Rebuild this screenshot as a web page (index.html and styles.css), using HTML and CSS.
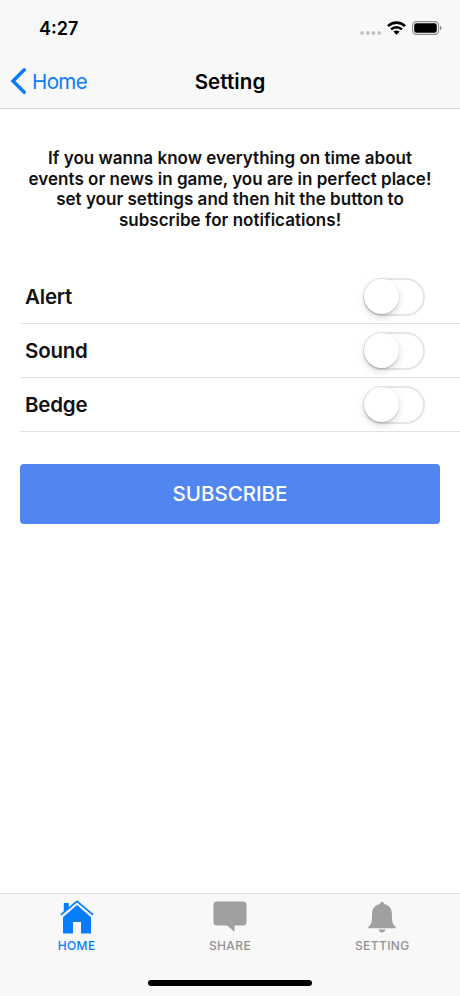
FILE: index.html
```
<!DOCTYPE html>
<html lang="en">
<head>
    <meta charset="UTF-8">
    <meta name="viewport" content="width=device-width, initial-scale=1.0">
    <title>Setting</title>
    <link rel="stylesheet" href="styles.css">
</head>
<body>

<div class="screen">
    <header class="header">
        <div class="status-bar">
            <span class="time">4:27</span>
            <div class="status-icons">
                <svg class="dots" width="22" height="4" viewBox="0 0 22 4" fill="#c2c2c2">
                    <circle cx="2" cy="2" r="1.9"/>
                    <circle cx="7.8" cy="2" r="1.9"/>
                    <circle cx="13.5" cy="2" r="1.9"/>
                    <circle cx="19.3" cy="2" r="1.9"/>
                </svg>
                <svg class="wifi" width="19" height="14" viewBox="0 0 19 14">
                    <g fill="none" stroke="#000" stroke-width="2.6">
                        <path d="M1 5.1C5.7 .5 13.3 .5 18 5.1"/>
                        <path d="M4.1 8.4c3-2.9 7.8-2.9 10.8 0"/>
                    </g>
                    <path d="M6.4 10.6c1.8-1.6 4.4-1.6 6.2 0L9.5 13.7z"/>
                </svg>
                <svg class="battery" width="30" height="14" viewBox="0 0 30 14">
                    <rect x=".6" y=".6" width="26" height="12.8" rx="3.6" fill="none" stroke="#8c8c8c" stroke-width="1.1"/>
                    <rect x="2.2" y="2.2" width="22.6" height="9.6" rx="2.2"/>
                    <path d="M28 4.8c2 .7 2 3.7 0 4.4z" fill="#8c8c8c"/>
                </svg>
            </div>
        </div>
        <nav class="nav-bar">
            <a class="back">
                <svg width="16" height="26" viewBox="0 0 16 26" fill="none" stroke="#087dfb" stroke-width="3.4">
                    <path d="M14.2 1.8L3 13l11.2 11.2" stroke-linecap="round"/>
                </svg>
                <span>Home</span>
            </a>
            <h1>Setting</h1>
        </nav>
    </header>

    <main class="content">
        <p class="intro">If you wanna know everything on time about<br>events or news in game, you are in perfect place!<br>set your settings and then hit the button to<br>subscribe for notifications!</p>

        <div class="list">
            <div class="row">
                <span class="label">Alert</span>
                <span class="switch"></span>
            </div>
            <div class="row">
                <span class="label">Sound</span>
                <span class="switch"></span>
            </div>
            <div class="row">
                <span class="label">Bedge</span>
                <span class="switch"></span>
            </div>
        </div>

        <button class="subscribe-btn">SUBSCRIBE</button>
    </main>

    <footer class="tab-bar">
        <div class="tabs">
            <a class="tab active">
                <svg width="34" height="34" viewBox="0 0 34 34" fill="#087dfb">
                    <path d="M3 17.2L17 5l14 12.2V33.6H21V22h-8v11.6H3z"/>
                    <path d="M.8 15.2L17 1.6l16.2 13.6" fill="none" stroke="#f8f8f8" stroke-width="3.6"/>
                    <path d="M3.8 3h5v5.4l-5 4.2z"/>
                    <path d="M.8 14.9L17 1.3l16.2 13.6" fill="none" stroke="#087dfb" stroke-width="1.7"/>
                </svg>
                <span>HOME</span>
            </a>
            <a class="tab">
                <svg width="34" height="34" viewBox="0 0 34 34" fill="#a0a0a0">
                    <path d="M4 1.4h26a3.5 3.5 0 0 1 3.5 3.5v17a3.5 3.5 0 0 1-3.5 3.5h-8.5v6.3L14 25.4H4A3.5 3.5 0 0 1 .5 21.9v-17A3.5 3.5 0 0 1 4 1.4z"/>
                </svg>
                <span>SHARE</span>
            </a>
            <a class="tab">
                <svg width="34" height="34" viewBox="0 0 34 34" fill="#a0a0a0">
                    <path d="M17 1.7c1.4 0 2 .9 2 2.4 4.9 1 7.9 4.3 7.9 9.4 0 7.7.3 10.8 3.7 13.3v1.4H3.4v-1.4c3.4-2.5 3.7-5.6 3.7-13.3 0-5.1 3-8.4 7.9-9.4 0-1.5.6-2.4 2-2.4z"/>
                    <path d="M13.7 29.4h6.6c-.4 2-1.6 3-3.3 3s-2.9-1-3.3-3z"/>
                </svg>
                <span>SETTING</span>
            </a>
        </div>
        <div class="home-indicator"></div>
    </footer>
</div>

</body>
</html>
```
FILE: styles.css
```
* {
    box-sizing: border-box;
}
body {
    margin: 0;
    font-family: Inter, "Liberation Sans", sans-serif;
    background: #fff;
    color: #111;
}
.screen {
    display: flex;
    flex-direction: column;
    height: 996px;
}
.header {
    height: 109px;
    background: #f8f8f8;
    border-bottom: 1px solid #d9d9d9;
    color: #000;
}
.status-bar {
    display: flex;
    justify-content: space-between;
    height: 54px;
    padding: 17px 18px 0 39px;
}
.time {
    font-size: 18px;
    font-weight: 600;
    line-height: 24px;
}
.status-icons {
    display: flex;
    align-items: flex-start;
    padding-top: 4px;
}
.dots {
    margin: 10px 5px 0 0;
}
.wifi {
    margin-right: 6px;
}
.nav-bar {
    display: grid;
    grid-template-columns: 1fr auto 1fr;
    align-items: center;
    height: 54px;
    padding: 0 10px;
}
.back {
    display: flex;
    align-items: center;
    gap: 6px;
    color: #087dfb;
    font-size: 20.5px;
    letter-spacing: -0.6px;
}
h1 {
    margin: 0;
    font-size: 20.5px;
    font-weight: 600;
    letter-spacing: 0.1px;
}
.content {
    flex: 1;
    padding: 39px 20px 0;
}
.intro {
    margin: 0;
    text-align: center;
    white-space: nowrap;
    font-size: 17px;
    font-weight: 600;
    line-height: 20.5px;
    letter-spacing: 0.02px;
}
.list {
    margin: 39.6px -20px 0 0;
}
.row {
    display: flex;
    align-items: center;
    justify-content: space-between;
    height: 54px;
    padding: 1px 35px 0 5px;
    border-bottom: 1px solid #e2e2e2;
}
.label {
    font-size: 20.5px;
    font-weight: 600;
    letter-spacing: -0.2px;
}
.switch {
    display: flex;
    align-items: center;
    width: 62px;
    height: 38px;
    border: 2px solid #e6e6e6;
    border-radius: 19px;
}
.switch::before {
    content: "";
    width: 35px;
    height: 35px;
    margin-left: -1px;
    border-radius: 50%;
    background: #fff;
    box-shadow: 0 3px 7px rgba(0, 0, 0, 0.17), 0 1px 1px rgba(0, 0, 0, 0.16);
}
.subscribe-btn {
    display: block;
    width: 420px;
    height: 60px;
    margin-top: 32px;
    padding: 0;
    border: none;
    border-radius: 4px;
    background: #5185f0;
    color: #fff;
    font-family: inherit;
    font-size: 20.5px;
    font-weight: 500;
}
.tab-bar {
    height: 103px;
    background: #f8f8f8;
    border-top: 1px solid #dedede;
}
.tabs {
    display: grid;
    grid-template-columns: repeat(3, 1fr);
    height: 87px;
    padding-top: 6px;
}
.tab {
    display: flex;
    flex-direction: column;
    align-items: center;
    gap: 3px;
    color: #929292;
    font-size: 12px;
    font-weight: 500;
    line-height: 18px;
    letter-spacing: 0.4px;
}
.tab:last-child {
    padding-right: 2px;
}
.active {
    color: #087dfb;
}
.home-indicator {
    width: 164px;
    height: 6px;
    margin: -1px auto 0;
    border-radius: 3px;
    background: #000;
}
```
